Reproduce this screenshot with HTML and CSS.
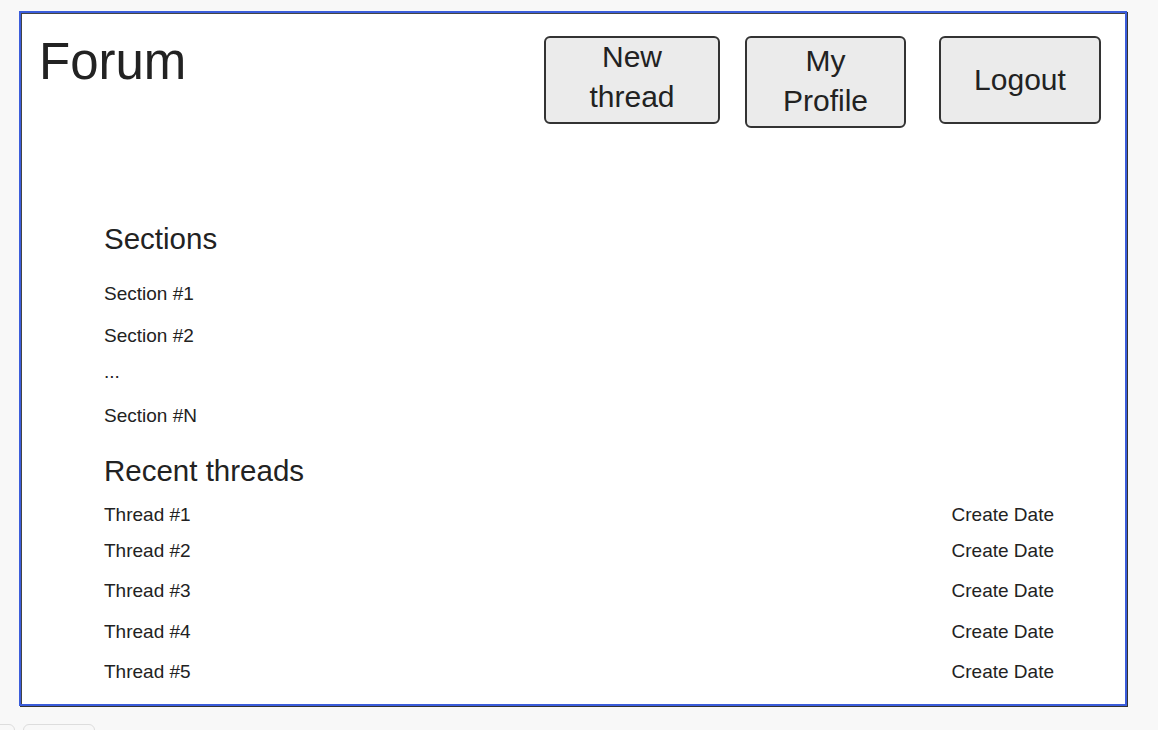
FILE: index.html
```html
<!DOCTYPE html>
<html lang="en">
<head>
<meta charset="utf-8">
<title>Forum</title>
<link rel="stylesheet" href="styles.css">
</head>
<body>
<div class="page">
  <div class="frame">
    <header class="header">
      <h1 class="title">Forum</h1>
      <nav class="actions">
        <button class="btn btn-new">New<br>thread</button>
        <button class="btn btn-profile">My<br>Profile</button>
        <button class="btn btn-logout">Logout</button>
      </nav>
    </header>
    <main class="main">
      <h2 class="heading heading-sections">Sections</h2>
      <ul class="section-list">
        <li class="item">Section #1</li>
        <li class="item">Section #2</li>
        <li class="item item-ellipsis">...</li>
        <li class="item item-last">Section #N</li>
      </ul>
      <h2 class="heading heading-recent">Recent threads</h2>
      <ul class="thread-list">
        <li class="thread"><span>Thread #1</span><span>Create Date</span></li>
        <li class="thread thread-second"><span>Thread #2</span><span>Create Date</span></li>
        <li class="thread"><span>Thread #3</span><span>Create Date</span></li>
        <li class="thread"><span>Thread #4</span><span>Create Date</span></li>
        <li class="thread"><span>Thread #5</span><span>Create Date</span></li>
      </ul>
    </main>
  </div>
  <div class="tabs">
    <div class="tab tab-a"></div>
    <div class="tab tab-b"></div>
  </div>
</div>
</body>
</html>
```

FILE: styles.css
```css
html, body {
  margin: 0;
  padding: 0;
  background: #f8f8f8;
  overflow: hidden;
}

body {
  font-family: "Liberation Sans", Arial, sans-serif;
  color: #222222;
}

.page {
  padding: 11px 0 0 19px;
}

.frame {
  box-sizing: border-box;
  width: 1108px;
  height: 695px;
  background: #ffffff;
  border: 2px solid #3b5ddb;
  box-shadow: inset 1px 1px 0 #444444, 1px 1px 0 #333333;
  padding: 23px 24px 0 18px;
}

.header {
  display: flex;
  align-items: flex-start;
}

.title {
  flex: 1;
  margin: 0;
  font-size: 51px;
  line-height: 1;
  font-weight: normal;
}

.actions {
  display: flex;
  align-items: flex-start;
}

.btn {
  box-sizing: border-box;
  display: flex;
  align-items: center;
  justify-content: center;
  text-align: center;
  font-family: "Liberation Sans", Arial, sans-serif;
  font-size: 30px;
  line-height: 40px;
  color: #222222;
  background: #ebebeb;
  border: 2px solid #333333;
  border-radius: 6px;
  padding: 0;
}

.btn-new {
  width: 176px;
  height: 88px;
  padding-bottom: 6px;
}

.btn-profile {
  width: 161px;
  height: 92px;
  margin-left: 25px;
  padding-bottom: 2px;
}

.btn-logout {
  width: 162px;
  height: 88px;
  margin-left: 33px;
}

.main {
  margin-left: 65px;
  padding-right: 47px;
}

.heading {
  margin: 0;
  font-size: 29.5px;
  line-height: 1;
  font-weight: normal;
}

.heading-sections {
  margin-top: 96px;
}

.heading-recent {
  margin-top: 30.5px;
}

.section-list,
.thread-list {
  list-style: none;
  margin: 0;
  padding: 0;
  font-size: 19px;
  line-height: 1;
}

.section-list {
  margin-top: 30px;
}

.item + .item {
  margin-top: 23px;
}

.item.item-ellipsis {
  margin-top: 17.5px;
}

.item.item-last {
  margin-top: 25px;
}

.thread-list {
  margin-top: 19.5px;
}

.thread {
  display: flex;
  justify-content: space-between;
}

.thread + .thread {
  margin-top: 21.5px;
}

.thread.thread-second {
  margin-top: 17px;
}

.tabs {
  display: flex;
  gap: 8px;
  margin: 18px 0 0 -19px;
}

.tab {
  height: 20px;
  border: 1px solid #dddddd;
  border-radius: 6px;
  background: #f8f8f8;
}

.tab-a {
  width: 24px;
  margin-left: -11px;
}

.tab-b {
  width: 70px;
}
```
